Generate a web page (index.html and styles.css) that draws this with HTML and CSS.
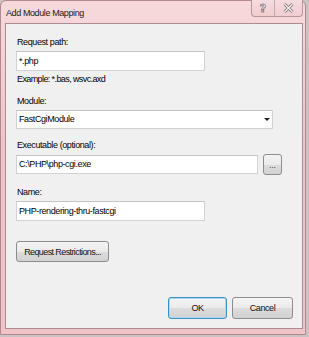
FILE: index.html
```html
<!DOCTYPE html>
<html>
<head>
<meta charset="utf-8">
<title>Add Module Mapping</title>
<link rel="stylesheet" href="styles.css">
</head>
<body>
<div class="window">
  <div class="titlebar">
    <span class="title">Add Module Mapping</span>
    <div class="caption-btns">
      <span class="cap-btn help">?</span>
      <span class="cap-btn close">
        <svg width="11" height="10" viewBox="0 0 11 10"><path d="M1.5 1 L9.5 9 M9.5 1 L1.5 9" stroke="#8a7a7c" stroke-width="3" fill="none"/><path d="M1.5 1 L9.5 9 M9.5 1 L1.5 9" stroke="#f4f1f1" stroke-width="1.2" fill="none"/></svg>
      </span>
    </div>
  </div>
  <div class="client">
    <div class="lbl first">Request path:</div>
    <div class="field short">*.php</div>
    <div class="hint">Example: *.bas, wsvc.axd</div>
    <div class="lbl">Module:</div>
    <div class="field select">FastCgiModule<span class="arrow"></span></div>
    <div class="lbl exec">Executable (optional):</div>
    <div class="exec-row">
      <div class="field exec-field">C:\PHP\php-cgi.exe</div>
      <div class="btn browse">...</div>
    </div>
    <div class="lbl name">Name:</div>
    <div class="field short">PHP-rendering-thru-fastcgi</div>
    <div class="btn restrict">Request Restrictions...</div>
    <div class="footer">
      <div class="btn ok">OK</div>
      <div class="btn cancel">Cancel</div>
    </div>
  </div>
</div>
</body>
</html>
```
FILE: styles.css
```css
html, body {
  margin: 0;
  padding: 0;
}
body {
  width: 309px;
  height: 337px;
  background: #c9c3c4;
  overflow: hidden;
  font-family: "Liberation Sans", Arial, sans-serif;
  font-size: 9px;
  letter-spacing: -0.4px;
  color: #000;
}
.window {
  width: 304px;
  height: 333px;
  background: linear-gradient(#f7d9dc, #efc5c9 40%, #f0c4c8);
  border: 1px solid #b18a8f;
  border-radius: 6px 6px 0 0;
  display: flex;
  flex-direction: column;
}
.titlebar {
  height: 22px;
  display: flex;
  align-items: flex-start;
  justify-content: space-between;
  padding-left: 5px;
}
.title {
  margin-top: 5px;
  line-height: 14px;
  color: #1a1a1a;
}
.caption-btns {
  display: flex;
  margin-right: 2px;
  margin-top: -1px;
  height: 16px;
  border: 1px solid #b99599;
  border-top: none;
  border-radius: 0 0 4px 4px;
  background: linear-gradient(#f5dcdf, #f1cdd1);
}
.cap-btn {
  display: flex;
  align-items: center;
  justify-content: center;
  height: 16px;
}
.help {
  width: 22px;
  border-right: 1px solid #c8a6aa;
  font-family: "DejaVu Sans", sans-serif;
  font-weight: bold;
  font-size: 11px;
  letter-spacing: 0;
  color: #f6f2f2;
  -webkit-text-stroke: 0.8px #8a7a7c;
}
.close {
  width: 27px;
}
.client {
  margin: 0 2px 5px 4px;
  flex: 1;
  background: #f0f0f0;
  border: 1px solid #ab8d91;
  padding: 0 0 0 10px;
  display: flex;
  flex-direction: column;
}
.lbl {
  height: 14px;
  line-height: 14px;
  padding-left: 1px;
  margin-top: 8px;
}
.lbl.first { margin-top: 11px; }
.lbl.exec { margin-top: 9px; }
.lbl.name { margin-top: 10px; }
.hint {
  height: 14px;
  line-height: 14px;
  padding-left: 1px;
  margin-top: 1px;
  letter-spacing: -0.6px;
}
.field {
  margin-top: 2px;
  height: 18px;
  line-height: 18px;
  background: #fff;
  border: 1px solid #d2d2d2;
  border-top-color: #c4c4c4;
  padding-left: 2px;
  box-sizing: content-box;
}
.short { width: 185px; }
.select {
  width: 253px;
  height: 17px;
  line-height: 17px;
  display: flex;
  justify-content: space-between;
  align-items: center;
}
.arrow {
  width: 0;
  height: 0;
  border-left: 3px solid transparent;
  border-right: 3px solid transparent;
  border-top: 3px solid #222;
  margin-right: 2px;
}
.exec-row {
  display: flex;
  align-items: center;
  margin-top: 2px;
}
.exec-field {
  margin-top: 0;
  width: 238px;
  height: 17px;
  line-height: 17px;
}
.btn {
  box-sizing: border-box;
  border: 1px solid #8d8d8d;
  border-radius: 3px;
  background: linear-gradient(#f4f4f4, #ebebeb 50%, #dcdcdc 51%, #d2d2d2);
  display: flex;
  align-items: center;
  justify-content: center;
  color: #111;
  white-space: nowrap;
}
.browse {
  width: 19px;
  height: 21px;
  margin-left: 5px;
  font-size: 8px;
  letter-spacing: 0;
  line-height: 8px;
  padding-top: 2px;
}
.restrict {
  margin-top: 20px;
  width: 93px;
  height: 21px;
  letter-spacing: -0.6px;
}
.footer {
  margin-top: auto;
  margin-bottom: 9px;
  display: flex;
  justify-content: flex-end;
  gap: 5px;
  padding-right: 9px;
}
.ok {
  width: 59px;
  height: 22px;
  border-color: #3c8fc1;
  box-shadow: inset 0 0 0 1px #a9dcf4;
}
.cancel {
  width: 61px;
  height: 22px;
}
```
